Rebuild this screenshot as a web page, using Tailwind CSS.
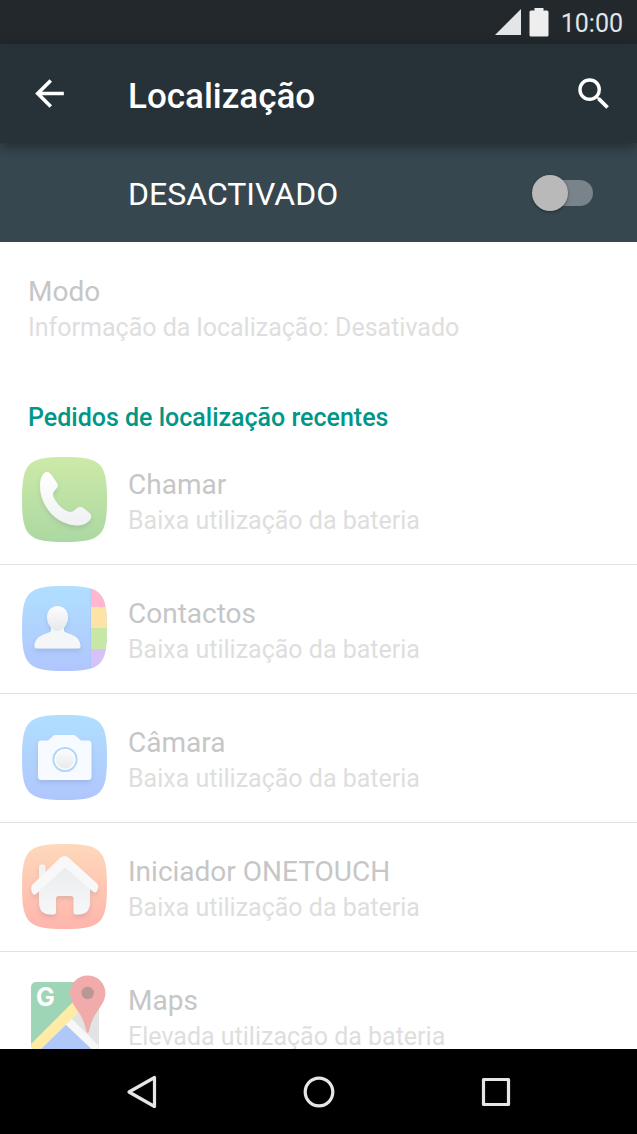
<!DOCTYPE html>
<html lang="pt" class="bg-black">
<head>
  <meta charset="UTF-8" />
  <meta name="viewport" content="width=device-width, initial-scale=1.0" />
  <title>Localização</title>
  <script src="https://cdn.jsdelivr.net/npm/@tailwindcss/browser@4"></script>
</head>
<body class="flex h-screen flex-col overflow-hidden bg-white font-['Roboto',sans-serif]">

  <!-- Status bar -->
  <div class="flex h-11 shrink-0 items-center justify-end bg-[#22282c] pr-3.5 text-[#e4e5e6]">
    <svg class="mr-2 h-[26px] w-[26px]" viewBox="0 0 26 26" fill="currentColor" aria-hidden="true"><path d="M26 0v26H0z" /></svg>
    <svg class="mr-3 h-[29px] w-5" viewBox="0 0 20 29" fill="#eeeeee" aria-hidden="true"><path d="M5.500 0h9v2.500H18q1.500 0 1.500 1.500v23q0 1.500-1.500 1.500H2q-1.500 0-1.500-1.500V4q0-1.500 1.500-1.500h3.500z" /></svg>
    <span class="pt-1 text-[25px] leading-9">10:00</span>
  </div>

  <!-- Toolbar -->
  <header class="z-10 flex h-[99px] shrink-0 items-center bg-[#263238] pr-[22px] pl-7 text-white shadow-[0_4px_12px_rgba(0,0,0,0.4)]">
    <button type="button" aria-label="Voltar" class="mr-[57px]">
      <svg class="size-[43px]" viewBox="0 0 24 24" fill="currentColor"><path d="M20 11H7.830l5.590-5.590L12 4l-8 8 8 8 1.410-1.410L7.830 13H20v-2z" /></svg>
    </button>
    <h1 class="flex-1 pt-1.5 text-[35px] leading-10 font-medium">Localização</h1>
    <button type="button" aria-label="Pesquisar">
      <svg class="size-[42px]" viewBox="0 0 24 24" fill="currentColor"><path d="M15.500 14h-.79l-.28-.27A6.471 6.471 0 0 0 16 9.500 6.500 6.500 0 1 0 9.500 16c1.610 0 3.090-.59 4.230-1.570l.27.28v.79l5 4.990L20.490 19l-4.990-5zm-6 0C7.010 14 5 11.990 5 9.500S7.010 5 9.500 5 14 7.010 14 9.500 11.990 14 9.500 14z" /></svg>
    </button>
  </header>

  <!-- Master switch -->
  <div class="flex h-[99px] shrink-0 items-center justify-between bg-[#37474f] pr-11 pl-32 text-white">
    <label for="location" class="pt-0.5 text-[32px] leading-10">DESACTIVADO</label>
    <input id="location" type="checkbox" role="switch" class="relative h-9 w-[61px] appearance-none before:absolute before:top-[5px] before:right-0 before:h-[26px] before:w-[56px] before:rounded-full before:bg-[#78838a] after:absolute after:top-0 after:left-0 after:size-9 after:rounded-full after:bg-[#b9b9b9] after:shadow-[0_1px_3px_rgba(0,0,0,0.4)]" />
  </div>

  <main class="min-h-0 flex-1 overflow-y-auto [scrollbar-width:none]">
    <div class="px-7 py-8">
      <p class="text-[28px] leading-9 text-[#c6c6c6]">Modo</p>
      <p class="text-[25px] leading-9 text-[#dedede]">Informação da localização: Desativado</p>
    </div>

    <h2 class="px-7 pt-[22px] text-[25px] leading-9 font-medium text-[#009688]">Pedidos de localização recentes</h2>

    <ul>
      <li class="flex h-[129px] items-center border-b border-[#e2e2e2] pl-[22px]">
        <svg class="mr-[21px] mb-0.5 size-[85px] shrink-0" viewBox="0 0 85 85" aria-hidden="true">
          <defs>
            <linearGradient id="green" x2="0" y2="1"><stop stop-color="#cdeaa8" /><stop offset="1" stop-color="#abd8a2" /></linearGradient>
            <linearGradient id="blue" x2="0" y2="1"><stop stop-color="#b0dffe" /><stop offset="1" stop-color="#b0c6fe" /></linearGradient>
            <linearGradient id="orange" x2="0" y2="1"><stop stop-color="#fed9bb" /><stop offset="1" stop-color="#feb5ac" /></linearGradient>
            <linearGradient id="paper" x2="0" y2="1"><stop stop-color="#ffffff" /><stop offset="1" stop-color="#f0f1f3" /></linearGradient>
            <linearGradient id="head" x2="0" y2="1"><stop stop-color="#fdfdfd" /><stop offset="1" stop-color="#e6e8eb" /></linearGradient>
            <linearGradient id="wall" x2="0" y2="1"><stop stop-color="#e9ebed" /><stop offset="1" stop-color="#f6f7f8" /></linearGradient>
            <clipPath id="tile"><path d="M0 42.500C0 6 6 0 42.500 0S85 6 85 42.500 79 85 42.500 85 0 79 0 42.500z" /></clipPath>
            <filter id="drop" x="-20%" y="-20%" width="140%" height="150%"><feDropShadow dx="0" dy="3" stdDeviation="2" flood-color="#4a5a70" flood-opacity="0.16" /></filter>
          </defs>
          <rect width="85" height="85" fill="url(#green)" clip-path="url(#tile)" />
          <path filter="url(#drop)" fill="url(#paper)" d="M25 15C27 15 29 17 31 20L35 26C36.500 28.500 36 30 34 32C31 35 30 37 32 41C35 47 40 52 46 54.500C49 55.500 51 55 54 52C57 49.500 59 49.500 62 51.500L67 55.500C70 58 70 61 67 64C62 69 54 69.500 46 67C29 62 18 45 18 29C18 21 21 15 25 15z" />
        </svg>
        <div class="pt-1.5">
          <p class="text-[28px] leading-9 text-[#c6c6c6]">Chamar</p>
          <p class="text-[25px] leading-9 text-[#dedede]">Baixa utilização da bateria</p>
        </div>
      </li>

      <li class="flex h-[129px] items-center border-b border-[#e2e2e2] pl-[22px]">
        <svg class="mr-[21px] mb-0.5 size-[85px] shrink-0" viewBox="0 0 85 85" aria-hidden="true">
          <g clip-path="url(#tile)">
            <rect width="85" height="85" fill="url(#blue)" />
            <path d="M69 0h16v21H69z" fill="#ffb6ce" />
            <path d="M69 21h16v21H69z" fill="#fee3a6" />
            <path d="M69 42h16v21H69z" fill="#c7e8a4" />
            <path d="M69 63h16v22H69z" fill="#d4c2f8" />
            <path d="M68 0h1v85h-1z" fill="#9fbbe8" fill-opacity=".3" />
          </g>
          <g filter="url(#drop)">
            <path fill="#f5f6f8" d="M29 41h13v4C44 48 58 48 58.500 60Q58.500 62.500 56 62.500H15Q12.500 62.500 12.500 60C13 48 27 48 29 45z" />
            <path fill="url(#head)" d="M35.500 20C42 20 46 25 46 31C46 38 41 45 35.500 45S25 38 25 31C25 25 29 20 35.500 20z" />
          </g>
        </svg>
        <div class="pt-1.5">
          <p class="text-[28px] leading-9 text-[#c6c6c6]">Contactos</p>
          <p class="text-[25px] leading-9 text-[#dedede]">Baixa utilização da bateria</p>
        </div>
      </li>

      <li class="flex h-[129px] items-center border-b border-[#e2e2e2] pl-[22px]">
        <svg class="mr-[21px] mb-0.5 size-[85px] shrink-0" viewBox="0 0 85 85" aria-hidden="true">
          <rect width="85" height="85" fill="url(#blue)" clip-path="url(#tile)" />
          <path filter="url(#drop)" fill="#f7faff" d="M19 25.500H26L31 21Q32 20 34 20H51Q53 20 54 21L59 25.500H66Q69.500 25.500 69.500 29V61.500Q69.500 65 66 65H19.500Q16 65 16 61.500V29Q16 25.500 19 25.500z" />
          <circle cx="43" cy="44.500" r="11.500" fill="url(#head)" stroke="#b5d6fb" stroke-width="2.200" />
          <circle cx="43" cy="44.500" r="9.800" fill="none" stroke="#ffffff" stroke-width="1.300" />
        </svg>
        <div class="pt-1.5">
          <p class="text-[28px] leading-9 text-[#c6c6c6]">Câmara</p>
          <p class="text-[25px] leading-9 text-[#dedede]">Baixa utilização da bateria</p>
        </div>
      </li>

      <li class="flex h-[129px] items-center border-b border-[#e2e2e2] pl-[22px]">
        <svg class="mr-[21px] mb-0.5 size-[85px] shrink-0" viewBox="0 0 85 85" aria-hidden="true">
          <rect width="85" height="85" fill="url(#orange)" clip-path="url(#tile)" />
          <g filter="url(#drop)">
            <path fill="#f2f3f5" d="M17 23Q17 20.500 19 20.500H21.500Q23.500 20.500 23.500 23V38H17z" />
            <path fill="url(#wall)" d="M42.500 18L68 42V58Q68 70.500 56 70.500H54Q51.500 70.500 51.500 68V54.500Q51.500 52 49 52H36.500Q34 52 34 54.500V68Q34 70.500 31.500 70.500H29Q17 70.500 17 58V42z" />
            <path fill="#f8f8f9" d="M38 14Q42.500 10 47 14L75 39.500Q77 41.500 75.500 46Q74 50 71 47.500L43 23.500L14 50Q12 52 10 48.500Q8 44 10.500 40.500z" />
          </g>
        </svg>
        <div class="pt-1.5">
          <p class="text-[28px] leading-9 text-[#c6c6c6]">Iniciador ONETOUCH</p>
          <p class="text-[25px] leading-9 text-[#dedede]">Baixa utilização da bateria</p>
        </div>
      </li>

      <li class="flex h-[129px] items-center border-b border-[#e2e2e2] pl-[22px]">
        <svg class="mr-[21px] mb-0.5 size-[85px] shrink-0" viewBox="0 0 85 85" aria-hidden="true">
          <clipPath id="map"><rect x="9" y="9" width="68" height="68" rx="5" /></clipPath>
          <g clip-path="url(#map)">
            <path fill="#9fd5b7" d="M9 9h68v68H9z" />
            <path fill="#e3e3e3" d="M44 46L77 13V77z" />
            <path fill="#b0c8f8" d="M9 84L43 49.500L77 84z" />
            <path fill="#f7f7f7" d="M41 49L47 43L80 76V86z" />
            <path fill="#feeba6" d="M9 71L53 27L61 35L9 86z" />
          </g>
          <text x="23.500" y="33" text-anchor="middle" font-family="Inter, sans-serif" font-weight="700" font-size="25" fill="#ffffff">G</text>
          <path fill="#f0abaa" d="M65.700 2.500A17.700 17.700 0 0 1 83.400 20C83.400 29 77 35 73 42C69 49 68 54 67 58.500Q65.700 61 64.400 58.500C63.400 54 62.400 49 58.400 42C54.400 35 48 29 48 20A17.700 17.700 0 0 1 65.700 2.500z" />
          <circle cx="65.700" cy="20" r="6.200" fill="#ba9695" />
        </svg>
        <div class="pt-1.5">
          <p class="text-[28px] leading-9 text-[#c6c6c6]">Maps</p>
          <p class="text-[25px] leading-9 text-[#dedede]">Elevada utilização da bateria</p>
        </div>
      </li>
    </ul>
  </main>

  <!-- System navigation -->
  <nav class="flex h-[85px] shrink-0 items-center justify-center bg-black text-[#e6e6e6]">
    <button type="button" aria-label="Anterior" class="flex w-[177px] justify-center">
      <svg class="size-9" viewBox="0 0 36 36" fill="none" stroke="currentColor" stroke-width="3.200" stroke-linejoin="round"><path d="M30.500 3.500v29L5 18z" /></svg>
    </button>
    <button type="button" aria-label="Início" class="flex w-[177px] justify-center">
      <svg class="size-9" viewBox="0 0 36 36" fill="none" stroke="currentColor" stroke-width="3.200"><circle cx="18" cy="18" r="13.800" /></svg>
    </button>
    <button type="button" aria-label="Recentes" class="flex w-[177px] justify-center">
      <svg class="size-9" viewBox="0 0 36 36" fill="none" stroke="currentColor" stroke-width="3.200" stroke-linejoin="round"><path d="M5.500 5.500h25v25h-25z" /></svg>
    </button>
  </nav>

</body>
</html>
